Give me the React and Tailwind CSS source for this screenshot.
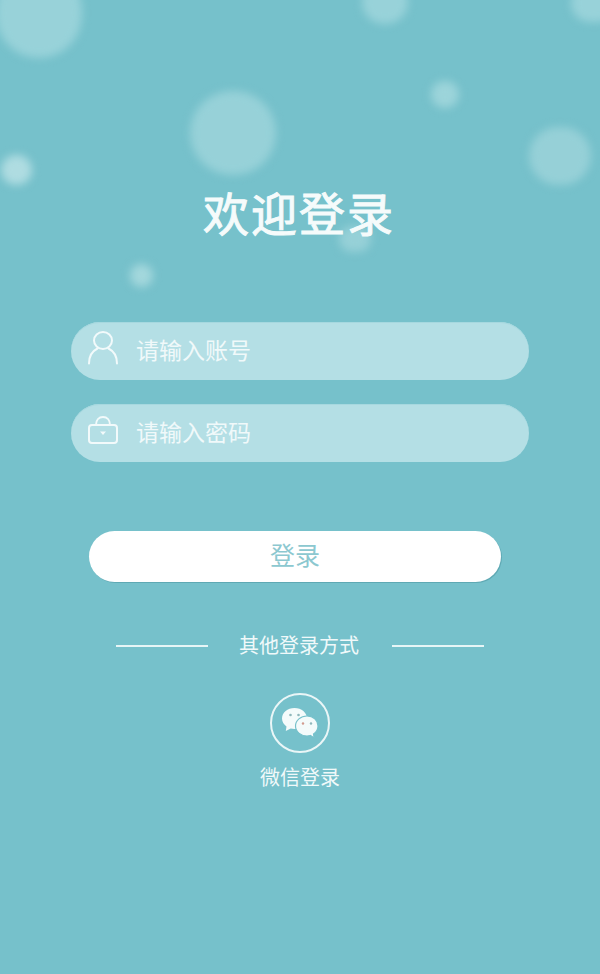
import React from 'react';

const bubbles = [
  'left-[-4px] top-[-32px] w-[86px] h-[90px] bg-[#98d2d9]',
  'left-[362px] top-[-20px] w-[46px] h-[44px] bg-[#98d2d9]',
  'left-[571px] top-[-16px] w-[46px] h-[38px] bg-[#98d2d9]',
  'left-[190px] top-[91px] w-[86px] h-[84px] bg-[#97d1d8]',
  'left-[431px] top-[81px] w-[28px] h-[27px] bg-[#9cd4da]',
  'left-[529px] top-[127px] w-[62px] h-[58px] bg-[#96d0d7]',
  'left-[1px] top-[155px] w-[31px] h-[30px] bg-[#afdce1]',
  'left-[339px] top-[226px] w-[32px] h-[26px] bg-[#96d0d7]',
  'left-[130px] top-[264px] w-[23px] h-[23px] bg-[#a3d7dc]',
];

function UserIcon() {
  return (
    <svg width="32" height="34" viewBox="0 0 32 34" fill="none" stroke="#f2fafb" strokeWidth="2" strokeLinecap="round">
      <ellipse cx="16" cy="9.500" rx="9" ry="8.500" />
      <path d="M2 32.500c0-7 3.500-12.500 8.500-15M30 32.500c0-7-3.500-12.500-8.500-15" />
    </svg>
  );
}

function LockIcon() {
  return (
    <svg width="32" height="30" viewBox="0 0 32 30" fill="none" stroke="#f2fafb" strokeWidth="2" strokeLinejoin="round">
      <rect x="2" y="10" width="28" height="18" rx="3" />
      <path d="M9 10c0-5 3-8 7-8s7 3 7 8" />
      <path d="M13 16.500h6l-3 3.500z" fill="#f2fafb" stroke="none" />
    </svg>
  );
}

function WechatIcon() {
  return (
    <svg width="38" height="32" viewBox="0 0 38 32" fill="none">
      <path d="M13.500 1C6.500 1 1 5.600 1 11.500c0 3.200 1.800 6 4.500 7.900L4.800 24l4.900-2.500c1.200.3 2.500.5 3.800.5 7 0 12.500-4.700 12.500-10.500S20.500 1 13.500 1z" fill="#f4fbfb" />
      <path d="M26 9c-6.300 0-11.500 4.400-11.500 10S19.700 29 26 29c1.200 0 2.300-.2 3.400-.5l3.800 2.500-.7-4c2.900-1.800 4.500-4.500 4.500-8 0-5.600-4.800-10-11-10z" fill="#f4fbfb" stroke="#76c1cb" strokeWidth="1.200" />
      <circle cx="9.500" cy="8" r="1.300" fill="#8fb7bb" />
      <circle cx="17.500" cy="8" r="1.300" fill="#8fb7bb" />
      <circle cx="22" cy="16.500" r="1.200" fill="#d19a8e" />
      <circle cx="30" cy="16.500" r="1.200" fill="#8fb7bb" />
    </svg>
  );
}

function Field({ icon, placeholder }) {
  return (
    <div className="flex items-center h-[58px] rounded-full bg-[#b4dfe5] shadow-[inset_0_1px_0_#a6d8df]">
      <div className="w-[66px] flex justify-center -translate-x-[1px] -translate-y-[3px]">{icon}</div>
      <span className="text-[23px] text-[#f0f9fa] -translate-x-[1px]">{placeholder}</span>
    </div>
  );
}

export default function App() {
  return (
    <div
      className="relative w-[600px] h-[974px] overflow-hidden bg-[#76c1cb]"
      style={{ fontFamily: '"Liberation Sans", "Noto Sans CJK SC", sans-serif' }}
    >
      {bubbles.map((b) => (
        <div key={b} className={`absolute rounded-full blur-[4px] ${b}`} />
      ))}

      <div className="relative flex flex-col pt-[186px]">
        <h1 className="text-center text-[46px] leading-[58px] tracking-[2px] font-normal text-[#f5fbfb] [-webkit-text-stroke:1px_#f5fbfb] -translate-x-[1px]">欢迎登录</h1>

        <div className="mt-[78px] mx-[71px] flex flex-col gap-[24px]">
          <Field icon={<UserIcon />} placeholder="请输入账号" />
          <Field icon={<LockIcon />} placeholder="请输入密码" />
        </div>

        <button className="mt-[69px] ml-[89px] mr-[99px] h-[51px] rounded-full bg-white text-[25px] text-[#8cc8d0] shadow-[1px_1px_0_#5fa9b4]">
          登录
        </button>

        <div className="mt-[49px] flex items-center justify-center h-[30px]">
          <div className="w-[92px] h-[2px] bg-[#e6f5f6]" />
          <span className="w-[184px] text-center text-[20px] text-[#f0f9fa] -translate-x-[1px]">其他登录方式</span>
          <div className="w-[92px] h-[2px] bg-[#e6f5f6]" />
        </div>

        <div className="mt-[32px] flex flex-col items-center">
          <div className="w-[60px] h-[60px] rounded-full border-2 border-[#eaf6f7] flex items-center justify-center">
            <WechatIcon />
          </div>
          <span className="mt-[11px] text-[20px] leading-[28px] text-[#f0f9fa]">微信登录</span>
        </div>
      </div>
    </div>
  );
}
